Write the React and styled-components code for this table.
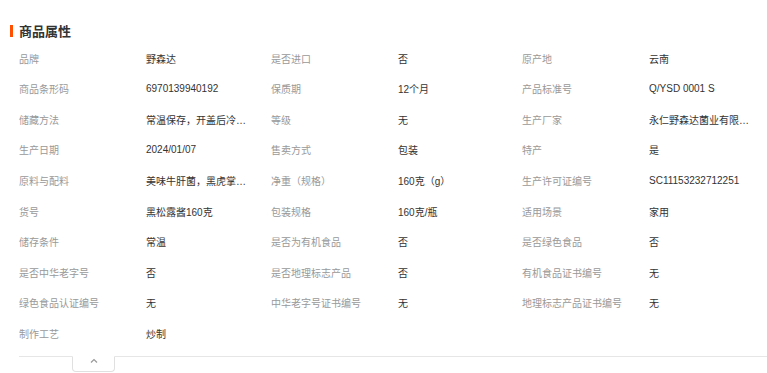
import React from 'react';
import styled, { createGlobalStyle } from 'styled-components';

const GlobalStyle = createGlobalStyle`
  html, body {
    margin: 0;
    padding: 0;
    background: #fff;
    font-family: "Liberation Sans", "Noto Sans CJK SC", sans-serif;
  }
`;

const attrs = [
  ['品牌', '野森达'], ['是否进口', '否'], ['原产地', '云南'],
  ['商品条形码', '6970139940192'], ['保质期', '12个月'], ['产品标准号', 'Q/YSD 0001 S'],
  ['储藏方法', '常温保存，开盖后冷藏保存'], ['等级', '无'], ['生产厂家', '永仁野森达菌业有限公司'],
  ['生产日期', '2024/01/07'], ['售卖方式', '包装'], ['特产', '是'],
  ['原料与配料', '美味牛肝菌，黑虎掌菌，菜籽油'], ['净重（规格）', '160克（g）'], ['生产许可证编号', 'SC11153232712251'],
  ['货号', '黑松露酱160克'], ['包装规格', '160克/瓶'], ['适用场景', '家用'],
  ['储存条件', '常温'], ['是否为有机食品', '否'], ['是否绿色食品', '否'],
  ['是否中华老字号', '否'], ['是否地理标志产品', '否'], ['有机食品证书编号', '无'],
  ['绿色食品认证编号', '无'], ['中华老字号证书编号', '无'], ['地理标志产品证书编号', '无'],
  ['制作工艺', '炒制'],
];

const Section = styled.section`
  width: 767px;
  padding-top: 22px;
`;

const Title = styled.h3`
  margin: 0 0 0 10px;
  display: flex;
  align-items: center;
  gap: 6px;
  font-size: 13px;
  line-height: 18px;
  font-weight: bold;
  color: #333;
  font-family: "Noto Sans CJK SC", sans-serif;

  &::before {
    content: '';
    width: 3px;
    height: 12px;
    background: #ff4f00;
  }
`;

const Grid = styled.div`
  margin: 3px 0 0 19px;
  display: grid;
  grid-template-columns: 127px 125px 127px 124px 127px 118px;
  grid-auto-rows: 30.55px;
  align-items: center;
  font-size: 10px;
`;

const Label = styled.div`
  color: #999;
  white-space: nowrap;
`;

const Value = styled.div`
  color: #333;
  max-width: 100px;
  white-space: nowrap;
  overflow: hidden;
  text-overflow: ellipsis;
`;

const Footer = styled.div`
  margin: 8px 0 0 19px;
  border-top: 1px solid #e6e6e6;
  height: 16px;
`;

const Toggle = styled.button`
  margin: -1px 0 0 53px;
  width: 43px;
  height: 16px;
  border: 1px solid #e0e0e0;
  border-top-color: #fff;
  border-radius: 0 0 4px 4px;
  background: #fff;
  display: flex;
  align-items: flex-start;
  justify-content: center;
  padding: 1px 0 0;
  box-sizing: border-box;
`;

export default function App() {
  return (
    <>
      <GlobalStyle />
      <Section>
        <Title>商品属性</Title>
        <Grid>
          {attrs.map(([k, v]) => (
            <React.Fragment key={k}>
              <Label>{k}</Label>
              <Value>{v}</Value>
            </React.Fragment>
          ))}
        </Grid>
        <Footer>
          <Toggle aria-label="收起">
            <svg width="8" height="5" viewBox="0 0 8 5">
              <path d="M1 4.5 L4 1.5 L7 4.5" fill="none" stroke="#999" strokeWidth="1.2" />
            </svg>
          </Toggle>
        </Footer>
      </Section>
    </>
  );
}
